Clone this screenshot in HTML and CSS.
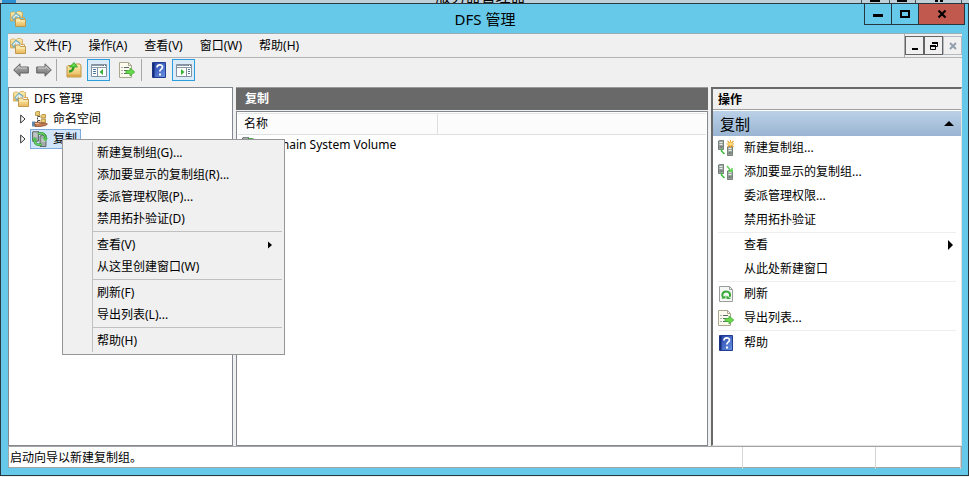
FILE: index.html
```html
<!DOCTYPE html>
<html lang="zh-CN">
<head>
<meta charset="utf-8">
<title>DFS 管理</title>
<link rel="stylesheet" href="styles.css">
</head>
<body>
<svg class="defs" aria-hidden="true">
  <defs>
    <linearGradient id="folder" x1="0" y1="0" x2="0" y2="1"><stop offset="0" stop-color="#fff0b8"/><stop offset="1" stop-color="#e9b858"/></linearGradient>
    <linearGradient id="steel" x1="0" y1="0" x2="0" y2="1"><stop offset="0" stop-color="#b8b8b8"/><stop offset="1" stop-color="#707070"/></linearGradient>
    <linearGradient id="book" x1="0" y1="0" x2="1" y2="1"><stop offset="0" stop-color="#2440a8"/><stop offset="1" stop-color="#6a94e4"/></linearGradient>
    <symbol id="dfs" viewBox="0 0 16 16">
      <path d="M.5 10V2l1-1h3l1 1v8zM6.500 5V1.500l1-1h3l1 1h1V6" fill="url(#folder)" stroke="#d2a552" stroke-width=".8"/>
      <path d="M2 7.500l4-4.500 4 3M3 9l3-1" fill="none" stroke="#74aebd" stroke-width="2.200"/>
      <path d="M3 7l3-3 3 2" fill="none" stroke="#e3f4f8" stroke-width="1.200"/>
      <path d="M5.500 15.500V8.500l1-1.500h3l1 1.500h5v7z" fill="url(#folder)" stroke="#bd9142" stroke-width=".9"/>
      <path d="M6 10h9" stroke="#fff2bd"/>
      <path d="M10.500 6.500h4v2" fill="none" stroke="#d2a552"/>
    </symbol>
    <symbol id="names" viewBox="0 0 16 16">
      <path d="M5.500 3.500v8M6 5.500h4M6 9.500h4" stroke="#444" fill="none" stroke-dasharray="2 1"/>
      <path d="M3.500 1.500l1-1h3v4h-4zM9 4.500l1-1h3.500v3.500H9zM9 9l1-1h3.500v3.500H9z" fill="#e9cb74" stroke="#ad8635" stroke-width=".8"/>
      <path d="M0 10.500h3v5H0z" fill="#5f8eac"/>
      <path d="M3 11.500l4-.5 2 1h4l2.500 1-2 1.500-5 1H3z" fill="#c47d50" stroke="#7c4427" stroke-width=".7"/>
      <path d="M3 12.500h4" stroke="#f0b88f"/>
    </symbol>
    <symbol id="server" viewBox="0 0 6 10">
      <path d="M.5 1l1-.7h4v9.200h-5z" fill="#9aa39c" stroke="#525d57" stroke-width=".7"/>
      <path d="M1.500 2.500h3M1.500 4.500h3" stroke="#e6ebe8"/><path d="M1.500 7h3" stroke="#59625d"/>
    </symbol>
    <symbol id="repl" viewBox="0 0 16 16">
      <path d="M.5 1l2-.8h4v10h-6zM8 5l2-1h4v11.500H8z" fill="#a2aba8" stroke="#4e5b58" stroke-width=".8"/>
      <path d="M1.500 3h4M1.500 5h4M9.500 8h4M9.500 10h4" stroke="#d9dfdc"/>
      <path d="M6 3c4-2 7.500 0 7.500 4.500M9.500 13C6 15 2.500 13 2.500 8.500" fill="none" stroke="#218b29" stroke-width="2.400"/>
      <path d="M6 3c4-2 7.500 0 7.500 4.500M9.500 13C6 15 2.500 13 2.500 8.500" fill="none" stroke="#70da68" stroke-width="1.200"/>
      <path d="M10.500 7H16l-2.500 3.500zM0 9.500h5.500L2.500 6z" fill="#4cc64a"/>
    </symbol>
    <symbol id="addrepl" viewBox="0 0 16 16">
      <use href="#server" x="0" y="0" width="6" height="10"/><use href="#server" x="9" y="6" width="6" height="10"/>
      <path d="M3.500 9v2l3 3" fill="none" stroke="#39bc38" stroke-width="1.500"/>
      <path d="M9 2l4 5M10 7.500h4V4" fill="none" stroke="#63d257" stroke-width="1.500"/>
    </symbol>
    <symbol id="newrepl" viewBox="0 0 16 16">
      <use href="#server" x="0" y="0" width="6" height="10"/><use href="#server" x="9" y="6" width="6" height="10"/>
      <path d="M3.500 9v2l3 3" fill="none" stroke="#39bc38" stroke-width="1.500"/>
      <path d="M12.500 0v8M8.500 4h8M9.500 1l6 6M15.500 1l-6 6" stroke="#eea22c" stroke-width="1.100"/>
      <circle cx="12.500" cy="4" r="1.800" fill="#ffdd72"/>
    </symbol>
    <symbol id="arrow" viewBox="0 0 16 14">
      <path d="M.7 7L7 .8V4h8.300v6H7v3.200z" fill="url(#steel)" stroke="#626262"/>
      <path d="M2.500 7L6 3.500V5h8" fill="none" stroke="#d0d0d0"/>
    </symbol>
    <symbol id="up" viewBox="0 0 16 16">
      <path d="M1 15V4.500l1-1h7l1-1.500h4l1 2V15z" fill="url(#folder)" stroke="#bd9344"/>
      <path d="M1.500 13.500h13" stroke="#d9a64a" stroke-width="2"/>
      <path d="M3 9.500c3 0 4.500-2 4.500-5.500" fill="none" stroke="#2e9c27" stroke-width="2.400"/>
      <path d="M3.500 5L8 .5 11.500 5z" fill="#62d84c" stroke="#2e9c27" stroke-width=".8"/>
    </symbol>
    <symbol id="export" viewBox="0 0 16 16">
      <path d="M.5.5h9l3 3v12H.5z" fill="#fbfaed" stroke="#aaa791"/>
      <path d="M9.500.5v3h3" fill="none" stroke="#aaa791"/>
      <path d="M2.500 5.500h1M2.500 8.500h1M2.500 11.500h1M5 5.500h5M5 8.500h4M5 11.500h5" stroke="#59676c"/>
      <path d="M7 8.500h4V6l4.800 4-4.800 4v-2.500H7z" fill="#69d94d" stroke="#44a834" stroke-width=".8"/>
    </symbol>
    <symbol id="help" viewBox="0 0 14 16">
      <path d="M.5.5h13v15H.5z" fill="url(#book)" stroke="#233d91"/>
      <path d="M1.500 1v14" stroke="#172c78" stroke-width="2"/>
      <path d="M5 5.500C5 2 10.500 2 10.500 5c0 2.200-2.700 2-2.700 4.500" fill="none" stroke="#fff" stroke-width="1.700"/>
      <path d="M7 11.500h2v2H7z" fill="#fff"/>
    </symbol>
    <symbol id="refresh" viewBox="0 0 14 16">
      <path d="M.5.5h10l3 3v12H.5z" fill="#f5f7f5" stroke="#9a9f9b"/>
      <path d="M10.500.5v3h3" fill="none" stroke="#9a9f9b"/>
      <path d="M4.500 12c-2.500-2.500-1-6.500 2.500-6.500s5 2.500 3.500 5.500" fill="none" stroke="#35a938" stroke-width="2"/>
      <path d="M7.500 9.500V13H12zM2.500 12.500h4V9.500z" fill="#35a938"/>
    </symbol>
    <symbol id="panel" viewBox="0 0 16 13">
      <path d="M.5.5h15v12H.5z" fill="#fff" stroke="#8392a2"/>
      <path d="M1 1.500h11M1 3.500h14" stroke="#8997a4"/><path d="M12 1.500h1M14 1.500h1" stroke="#5f6c79"/>
    </symbol>
  </defs>
</svg>

<div class="behind">
  <i class="behind-icon"></i>
  <span>服务器管理器</span>
  <svg class="behind-caption" width="108" height="3"><path d="M.5 0v3M28.500 0v3M54.500 0v3M100.500 0v3" stroke="#44545d"/><path d="M9 0h10v2H9zM36 0h10v2H36zM74 0h3v2h-3zM79 0h3v2h-3z"/></svg>
</div>
<main class="window">
  <header class="titlebar">
    <svg class="app-icon" width="16" height="16"><use href="#dfs"/></svg>
    <h1>DFS 管理</h1>
    <div class="caption">
      <button aria-label="最小化"><svg width="10" height="10"><path d="M0 5h10v3H0z"/></svg></button>
      <button aria-label="最大化"><svg width="10" height="10"><path d="M1 2h8v6H1z" fill="none" stroke="#000" stroke-width="2"/></svg></button>
      <button class="close" aria-label="关闭"><svg width="10" height="10"><path d="M1.500 1.500l7 7M8.500 1.500l-7 7" stroke="#000" stroke-width="2.200"/></svg></button>
    </div>
  </header>
  <div class="client">
    <div class="menubar">
      <svg width="16" height="16"><use href="#dfs"/></svg>
      <nav>
        <button>文件(F)</button><button>操作(A)</button><button>查看(V)</button><button>窗口(W)</button><button>帮助(H)</button>
      </nav>
      <div class="mdi">
        <button aria-label="最小化子窗口"><svg width="8" height="8"><path d="M1 6h6v2H1z"/></svg></button>
        <button aria-label="还原子窗口"><svg width="8" height="8"><path d="M2.500 2V.5h5v4H6M.5 3.500h5v4h-5z" fill="none" stroke="#000"/><path d="M2 0h6v2H2zM0 3h6v2H0z"/></svg></button>
        <button disabled aria-label="关闭子窗口"><svg width="8" height="8"><path d="M1 1l6 6M7 1L1 7" stroke="#93a0ad" stroke-width="2"/></svg></button>
      </div>
    </div>
    <div class="toolbar">
      <button aria-label="后退"><svg width="16" height="14"><use href="#arrow"/></svg></button>
      <button aria-label="前进"><svg class="flip" width="16" height="14"><use href="#arrow"/></svg></button>
      <i></i>
      <button class="wide" aria-label="上一级"><svg width="16" height="16"><use href="#up"/></svg></button>
      <button class="on" aria-label="显示控制台树"><svg width="16" height="13"><use href="#panel"/><path d="M6.500 4v8" stroke="#8392a2"/><path d="M2 5.500h3M2 7.500h3M2 9.500h3" stroke="#4c7ca6"/><path d="M12 5v6L8.500 8z" fill="#34b233"/></svg></button>
      <button class="wide" aria-label="导出列表"><svg width="16" height="16"><use href="#export"/></svg></button>
      <i></i>
      <button class="wide" aria-label="帮助"><svg width="14" height="16"><use href="#help"/></svg></button>
      <button class="on" aria-label="显示操作窗格"><svg width="16" height="13"><use href="#panel"/><path d="M10.500 4v8" stroke="#8392a2"/><path d="M12 5.500h2M12 7.500h2M12 9.500h2" stroke="#4c7ca6"/><path d="M5 5v6l3.500-3z" fill="#34b233"/></svg></button>
    </div>
    <div class="panes">
      <section class="tree">
        <ul>
          <li class="root"><svg width="16" height="16"><use href="#dfs"/></svg><span>DFS 管理</span></li>
          <li><svg class="twist" width="6" height="10"><path d="M.7 1v8L5 5z"/></svg><span class="node"><svg width="16" height="16"><use href="#names"/></svg>命名空间</span></li>
          <li><svg class="twist" width="6" height="10"><path d="M.7 1v8L5 5z"/></svg><span class="node selected"><svg width="16" height="16"><use href="#repl"/></svg>复制</span></li>
        </ul>
        <div class="context">
          <button>新建复制组(G)...</button>
          <button>添加要显示的复制组(R)...</button>
          <button>委派管理权限(P)...</button>
          <button>禁用拓扑验证(D)</button>
          <hr>
          <button>查看(V)<svg width="4" height="8"><path d="M0 0.500v7L4 4z"/></svg></button>
          <button>从这里创建窗口(W)</button>
          <hr>
          <button>刷新(F)</button>
          <button>导出列表(L)...</button>
          <hr>
          <button>帮助(H)</button>
        </div>
      </section>
      <section class="content">
        <h2>复制</h2>
        <div class="list">
          <table>
            <thead><tr><th class="name">名称</th><th></th></tr></thead>
            <tbody><tr><td colspan="2"><svg width="16" height="16"><use href="#repl"/></svg>Domain System Volume</td></tr></tbody>
          </table>
        </div>
      </section>
      <aside class="actions">
        <h2>操作</h2>
        <h3>复制<svg width="10" height="5"><path d="M0 5l5-5 5 5z"/></svg></h3>
        <div class="group">
          <button><svg width="16" height="16"><use href="#newrepl"/></svg><span>新建复制组...</span></button>
          <button><svg width="16" height="16"><use href="#addrepl"/></svg><span>添加要显示的复制组...</span></button>
          <button><span>委派管理权限...</span></button>
          <button><span>禁用拓扑验证</span></button>
        </div>
        <div class="group">
          <button><span>查看</span><svg class="more" width="5" height="10"><path d="M0 0v10l5-5z"/></svg></button>
          <button><span>从此处新建窗口</span></button>
        </div>
        <div class="group">
          <button><svg width="16" height="16"><use href="#refresh"/></svg><span>刷新</span></button>
          <button><svg width="16" height="16"><use href="#export"/></svg><span>导出列表...</span></button>
        </div>
        <div class="group">
          <button><svg width="16" height="16"><use href="#help"/></svg><span>帮助</span></button>
        </div>
      </aside>
    </div>
    <footer class="status"><span>启动向导以新建复制组。</span><span></span><span></span></footer>
  </div>
</main>
</body>
</html>
```
FILE: styles.css
```css
* { box-sizing: border-box; }
body {
  margin: 0;
  height: 100vh;
  display: flex;
  flex-direction: column;
  overflow: hidden;
  background: #eef0f2;
  color: #000;
  font: 12px/20px "Noto Sans", "Noto Sans CJK SC", sans-serif;
}
.defs { position: absolute; width: 0; height: 0; }
svg { display: block; flex: none; }
button {
  display: flex;
  align-items: center;
  padding: 0;
  border: 0;
  background: none;
  color: inherit;
  font: inherit;
  white-space: nowrap;
}
h1, h2, h3, ul { margin: 0; padding: 0; font-weight: normal; }

.behind {
  height: 3px;
  flex: none;
  overflow: hidden;
  background: #bfd0d9;
  display: grid;
  grid-template-columns: 1fr auto 1fr;
  align-items: end;
  align-content: end;
  padding-right: 8px;
  font-size: 15px;
  line-height: 14px;
}
.behind-icon { width: 14px; height: 3px; margin-left: 2px; background: #2c8fd0; }
.behind-caption { justify-self: end; margin-right: -8px; }
.window {
  flex: 1;
  min-height: 0;
  margin-bottom: 1px;
  display: flex;
  flex-direction: column;
  border: 1px solid #2b3a42;
  background: #66c9ea;
  padding: 0 6px 7px 7px;
}
.titlebar {
  flex: none;
  height: 29px;
  display: grid;
  grid-template-columns: 1fr auto 1fr;
  align-items: center;
}
.app-icon { margin-left: 2px; }
h1 { font-size: 15px; }
.caption {
  align-self: start;
  justify-self: end;
  display: flex;
  margin: -1px -3px 0 0;
}
.caption button {
  width: 28px;
  height: 22px;
  margin-left: -1px;
  justify-content: center;
  border: 1px solid #26363e;
}
.caption .close { width: 47px; background: #c2594f; }

.client {
  flex: 1;
  min-height: 0;
  display: flex;
  flex-direction: column;
  background: #f0f0f0;
  border-top: 1px solid #9aabb2;
}
.menubar {
  flex: none;
  height: 24px;
  display: flex;
  align-items: center;
  padding-left: 2px;
  border-bottom: 1px solid #b4b4b4;
}
nav { flex: 1; display: flex; gap: 17px; padding-left: 8px; }
.mdi { display: flex; align-items: center; height: 24px; border-left: 1px solid #aaa; }
.mdi button { width: 19px; height: 19px; justify-content: center; border: 1px solid #646464; }
.mdi button:disabled { border-color: #b5bac0; }

.toolbar {
  flex: none;
  height: 29px;
  display: flex;
  align-items: start;
  padding: 1px 0 0 1px;
}
.toolbar button { width: 23px; height: 22px; justify-content: center; }
.toolbar .wide { width: 30px; padding-left: 4px; }
.toolbar .on { width: 23px; border: 1px solid #2e9fde; background: #dcebf8; }
.toolbar i { width: 1px; height: 22px; background: #a8a8a8; margin-left: 1px; }
.flip { transform: scaleX(-1); }

.panes {
  flex: 1;
  min-height: 0;
  display: grid;
  grid-template-columns: 225px 1fr 251px;
  gap: 3px;
}
.tree { position: relative; background: #fff; border: 1px solid #828790; padding: 1px 0 0 4px; }
.tree ul { list-style: none; }
.tree li { display: flex; align-items: center; height: 20px; }
.tree .root { gap: 5px; }
.twist { margin: 0 4px 0 7px; fill: #fff; stroke: #333; }
.node { display: flex; align-items: center; gap: 5px; height: 20px; padding: 0 3px 0 1px; border: 1px solid transparent; }
.selected { background: #d0e5fa; border-color: #7eabdd; }

.context {
  position: absolute;
  z-index: 1;
  left: 53px;
  top: 51px;
  width: 223px;
  padding: 2px;
  border: 1px solid #969696;
  background: linear-gradient(90deg, transparent 29px, #c0c0c0 29px, #c0c0c0 30px, transparent 30px) 0 2px / 100% calc(100% - 4px) no-repeat #f0f0f0;
}
.context button { width: 100%; height: 22px; padding: 0 10px 0 32px; justify-content: space-between; }
.context hr { height: 1px; margin: 1px 0 2px 28px; border: 0; background: #c0c0c0; }

.content { display: flex; flex-direction: column; gap: 1px; }
.content h2 { height: 23px; padding-left: 9px; border-top: 1px solid #999; background: #696969; color: #fff; font-weight: bold; font-size: 12px; line-height: 22px; }
.list { flex: 1; border: 1px solid #828790; background: #fff; padding: 1px; }
table { width: 100%; border-collapse: separate; border-spacing: 0; }
th { height: 21px; padding: 0 0 0 6px; text-align: left; font-weight: normal; background: #fcfcfc; border-bottom: 1px solid #dedfe1; border-top: 1px solid #e4e5e7; }
.name { width: 200px; border-right: 1px solid #dedfe1; }
td { padding: 0 4px; height: 20px; }
td svg { float: left; margin: 2px 4px 0 0; }

.actions { border: 1px solid #e2e2e2; border-left: 2px solid #696969; border-top: 2px solid #696969; background: #fff; }
.actions h2 { height: 21px; padding-left: 5px; font-size: 12px; line-height: 21px; font-weight: bold; background: #f0f0f0; border-bottom: 1px solid #a0a0a0; }
.actions h3 { height: 25px; margin-top: 1px; padding: 0 7px; display: flex; align-items: center; justify-content: space-between; font-size: 15px; background: linear-gradient(#bbd1e8, #99b4d1); }
.group { margin: 0 5px; }
.group + .group { border-top: 1px solid #eee; }
.group button { width: 100%; height: 24px; }
.group span { flex: 1; text-align: left; padding-left: 26px; }
.group svg + span { padding-left: 10px; }
.more { margin-right: 3px; }

.status { flex: none; height: 22px; display: grid; grid-template-columns: 1fr 133px 85px; background: #fff; border: 1px solid #a5a5a5; line-height: 22px; }
.status span { border-right: 1px solid #d5d5d5; padding-left: 1px; }
```
